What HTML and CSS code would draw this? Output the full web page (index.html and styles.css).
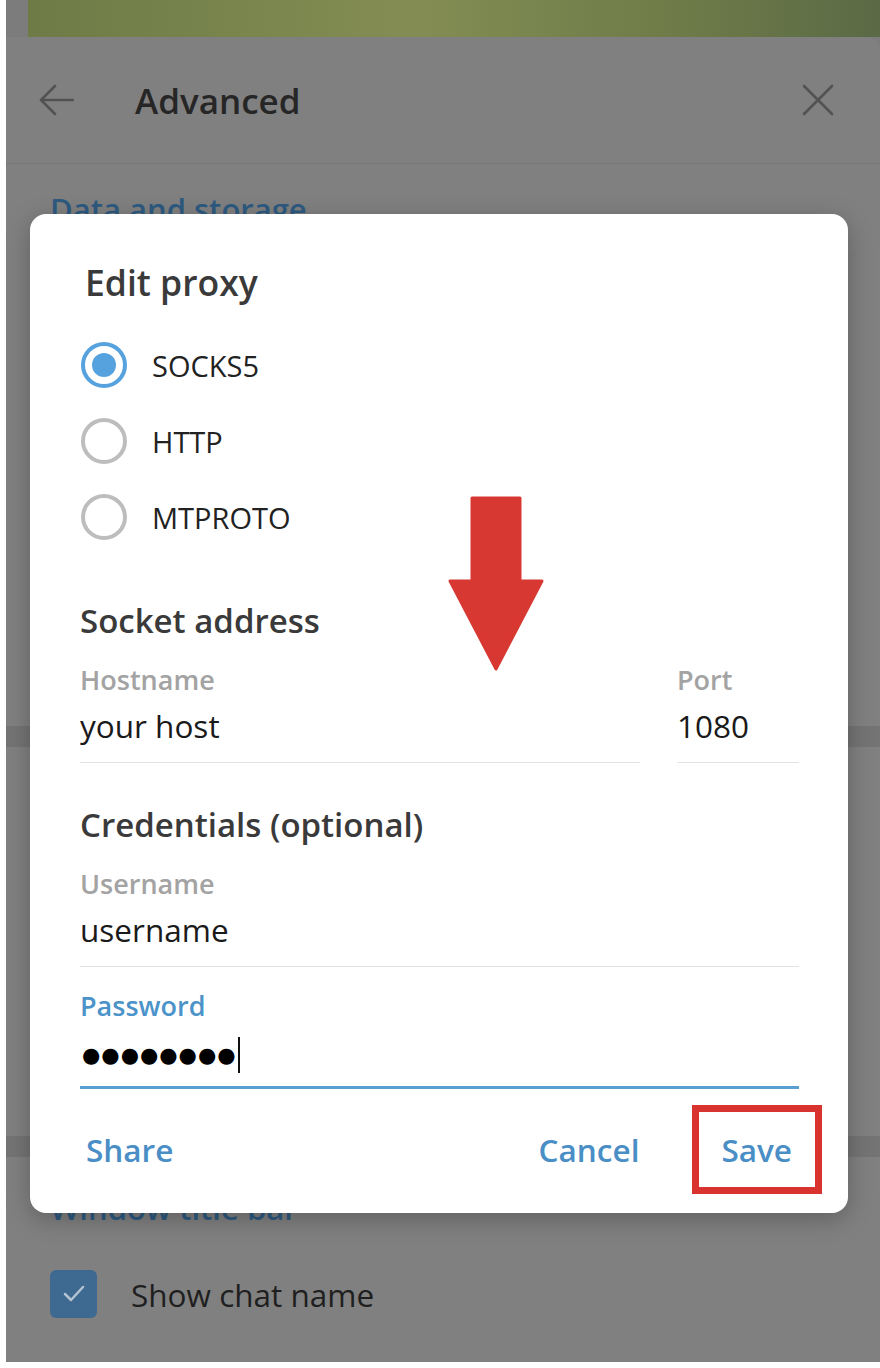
FILE: index.html
```html
<!DOCTYPE html>
<html lang="en">
<head>
    <meta charset="UTF-8">
    <meta name="viewport" content="width=device-width, initial-scale=1.0">
    <title>Edit proxy</title>
    <link rel="stylesheet" href="styles.css">
</head>
<body>
    <div class="screen">
        <div class="window">
            <div class="chat-bg"></div>
            <div class="settings">
                <div class="settings-header">
                    <svg class="icon-back" width="36" height="32" viewBox="0 0 36 32">
                        <path d="M35 16 H3 M17 2 L3 16 L17 30" fill="none" stroke="#525252" stroke-width="2.6" stroke-linecap="round" stroke-linejoin="round"/>
                    </svg>
                    <span class="settings-title">Advanced</span>
                    <svg class="icon-close" width="32" height="32" viewBox="0 0 32 32">
                        <path d="M2 2 L30 30 M30 2 L2 30" fill="none" stroke="#525252" stroke-width="2.6" stroke-linecap="round"/>
                    </svg>
                </div>
                <div class="settings-section section-data">
                    <div class="section-title">Data and storage</div>
                </div>
                <div class="section-divider"></div>
                <div class="settings-section section-mid"></div>
                <div class="section-divider"></div>
                <div class="settings-section section-window">
                    <div class="section-title">Window title bar</div>
                    <div class="check-row">
                        <span class="checkbox">
                            <svg width="24" height="20" viewBox="0 0 24 20">
                                <path d="M3 10 L9 16 L21 3" fill="none" stroke="#b4c3d1" stroke-width="2.5" stroke-linecap="round" stroke-linejoin="round"/>
                            </svg>
                        </span>
                        <span class="check-label">Show chat name</span>
                    </div>
                </div>
            </div>
        </div>

        <div class="dialog">
            <h2 class="dialog-title">Edit proxy</h2>

            <div class="radio-list">
                <div class="radio-row">
                    <span class="radio checked"></span>
                    <span class="radio-label">SOCKS5</span>
                </div>
                <div class="radio-row">
                    <span class="radio"></span>
                    <span class="radio-label">HTTP</span>
                </div>
                <div class="radio-row">
                    <span class="radio"></span>
                    <span class="radio-label">MTPROTO</span>
                </div>
            </div>

            <h3 class="group-title">Socket address</h3>
            <div class="field-row">
                <div class="field field-host">
                    <div class="field-label">Hostname</div>
                    <div class="field-value">your host</div>
                </div>
                <div class="field field-port">
                    <div class="field-label">Port</div>
                    <div class="field-value">1080</div>
                </div>
            </div>

            <h3 class="group-title credentials">Credentials (optional)</h3>
            <div class="field">
                <div class="field-label">Username</div>
                <div class="field-value">username</div>
            </div>
            <div class="field field-active">
                <div class="field-label">Password</div>
                <div class="field-value"><span class="pw-dots">●●●●●●●●</span><span class="caret"></span></div>
            </div>

            <div class="dialog-actions">
                <span class="action share">Share</span>
                <span class="action cancel">Cancel</span>
                <span class="action save">Save</span>
            </div>
        </div>

        <!-- annotations drawn over the screenshot -->
        <svg class="annot-arrow" width="96" height="176" viewBox="0 0 96 176">
            <path d="M24 2 H72 V85 H94 L48 173 L2 85 H24 Z" fill="#d83832" stroke="#d83832" stroke-width="3" stroke-linejoin="round"/>
        </svg>
        <div class="annot-box"></div>
    </div>
</body>
</html>
```

FILE: styles.css
```css
* {
    margin: 0;
    padding: 0;
    box-sizing: border-box;
}

body {
    background: #fff;
    font-family: 'Open Sans', 'Liberation Sans', sans-serif;
}

.screen {
    position: relative;
    width: 880px;
    height: 1368px;
    background: #fff;
    overflow: hidden;
}

/* dimmed settings window behind the dialog */
.window {
    margin-left: 6px;
    height: 1362px;
    background: #7c7c7c;
    display: flex;
    flex-direction: column;
}

.chat-bg {
    height: 37px;
    margin-left: 22px;
    background: linear-gradient(90deg, #6e7b46 0%, #838d53 45%, #6f7c49 75%, #5b6a45 100%);
}

.settings {
    flex: 1;
    background: #808080;
    border-top-right-radius: 14px;
    display: flex;
    flex-direction: column;
}

.settings-header {
    height: 127px;
    display: flex;
    align-items: center;
    padding: 0 46px 0 32px;
    border-bottom: 1px solid #767676;
}

.settings-title {
    margin-left: 61px;
    font-size: 35px;
    font-weight: 600;
    color: #262626;
}

.icon-close {
    margin-left: auto;
}

.settings-section {
    padding-left: 44px;
}

.section-data {
    height: 562px;
    padding-top: 25px;
}

.section-mid {
    height: 389px;
}

.section-divider {
    height: 21px;
    background: #747474;
}

.section-window {
    padding-top: 31px;
}

.section-title {
    font-size: 31px;
    line-height: 40px;
    font-weight: 600;
    color: #2e5a80;
}

.check-row {
    display: flex;
    align-items: center;
    margin-top: 42px;
}

.checkbox {
    width: 47px;
    height: 48px;
    border-radius: 6px;
    background: #3e6a92;
    display: flex;
    align-items: center;
    justify-content: center;
}

.check-label {
    margin-left: 34px;
    font-size: 31.5px;
    color: #1f1f1f;
}

/* the modal */
.dialog {
    position: absolute;
    left: 30px;
    top: 214px;
    width: 818px;
    height: 999px;
    background: #fff;
    border-radius: 16px;
    box-shadow: 0 6px 24px rgba(0, 0, 0, 0.25);
    padding: 46px 49px 0 50px;
}

.dialog-title {
    padding-left: 5px;
    font-size: 35.5px;
    line-height: 44px;
    font-weight: 600;
    color: #3a3a3a;
}

.radio-list {
    margin-top: 23px;
}

.radio-row {
    height: 76px;
    display: flex;
    align-items: center;
}

.radio {
    width: 46px;
    height: 46px;
    margin-left: 1px;
    border-radius: 50%;
    border: 4px solid #bdbdbd;
    position: relative;
}

.radio.checked {
    border-color: #55a2de;
}

.radio.checked::after {
    content: '';
    position: absolute;
    left: 7px;
    top: 7px;
    width: 24px;
    height: 24px;
    border-radius: 50%;
    background: #55a2de;
}

.radio-label {
    margin-left: 25px;
    font-size: 29px;
    color: #222;
}

.group-title {
    margin-top: 44px;
    font-size: 33px;
    line-height: 44px;
    font-weight: 600;
    color: #3a3a3a;
}

.group-title.credentials {
    margin-top: 40px;
}

.field-row {
    display: flex;
    gap: 37px;
}

.field-host {
    width: 560px;
}

.field-port {
    width: 122px;
}

.field-label {
    margin-top: 20px;
    font-size: 27px;
    line-height: 34px;
    font-weight: 600;
    color: #a3a3a3;
}

.field-value {
    margin-top: 9px;
    padding-bottom: 16px;
    font-size: 31.5px;
    line-height: 40px;
    color: #1a1a1a;
    border-bottom: 1px solid #e3e3e3;
    display: flex;
    align-items: center;
}

.field-active .field-label {
    margin-top: 22px;
    color: #4b93c9;
}

.field-active .field-value {
    margin-top: 12px;
    padding-bottom: 11px;
    border-bottom: 3px solid #5a9fd2;
    padding-left: 2px;
}

.pw-dots {
    font-family: 'DejaVu Sans', sans-serif;
    font-size: 21px;
    letter-spacing: 1px;
    color: #000;
}

.caret {
    width: 2px;
    height: 36px;
    margin-left: 1px;
    background: #111;
}

.dialog-actions {
    margin-top: 39px;
    display: flex;
    font-size: 31.5px;
    line-height: 44px;
    font-weight: 600;
    color: #4a8ec6;
}

.share {
    margin-left: 6px;
}

.cancel {
    margin-left: auto;
}

.save {
    margin-left: 82px;
    margin-right: 7px;
}

/* red annotations */
.annot-arrow {
    position: absolute;
    left: 448px;
    top: 496px;
}

.annot-box {
    position: absolute;
    left: 692px;
    top: 1105px;
    width: 130px;
    height: 89px;
    border: 7px solid #d8332f;
}
```
